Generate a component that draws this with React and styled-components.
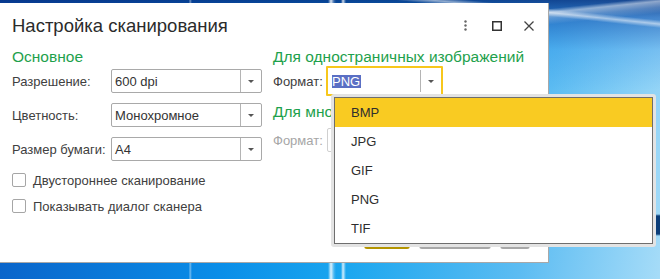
import React from 'react';
import styled, { createGlobalStyle } from 'styled-components';

const Global = createGlobalStyle`
  html, body { margin: 0; padding: 0; }
  body {
    width: 660px;
    height: 279px;
    overflow: hidden;
    font-family: "Liberation Sans", Arial, sans-serif;
  }
`;

const Desktop = styled.div`
  position: relative;
  width: 660px;
  height: 279px;
  overflow: hidden;
  box-sizing: border-box;
  padding-top: 3px;
  background-color: #0a80e0;
  background-image:
    linear-gradient(90deg, transparent 189px, rgba(255,255,255,0.45) 190px, transparent 192px),
    linear-gradient(90deg, transparent 328px, rgba(255,255,255,0.85) 331px, rgba(255,255,255,0.2) 334px, transparent 336px, transparent 341px, rgba(255,255,255,0.8) 343px, transparent 346px),
    linear-gradient(180deg, transparent 214px, #0b3d78 216px, #0b3d78 234px, transparent 236px),
    linear-gradient(174deg, transparent 66px, rgba(255,255,255,0.5) 70px, rgba(255,255,255,0.2) 76px, transparent 82px),
    linear-gradient(186deg, transparent 20px, rgba(255,255,255,0.55) 24px, transparent 28px),
    linear-gradient(180deg, rgba(6,50,130,0.85) 0px, rgba(8,70,170,0.55) 18px, rgba(10,110,220,0.2) 50px, transparent 90px),
    linear-gradient(100deg, #0a5cc4 0%, #0a8ee8 38%, #1aa6ef 55%, #5cbcf2 80%, #a6dcf8 100%);
  background-size: 100% 100%, 100% 100%, 8px 100%, 100% 100%, 100% 100%, 100% 100%, 100% 100%;
  background-position: 0 0, 0 0, 656px 0, 0 0, 0 0, 0 0, 0 0;
  background-repeat: no-repeat;
`;

const Dialog = styled.div`
  width: 549px;
  height: 260px;
  box-sizing: border-box;
  background: #fff;
  border-right: 1px solid #a8a8a8;
  border-bottom: 1px solid #a8a8a8;
  display: flex;
  flex-direction: column;
  color: #404040;
`;

const TitleBar = styled.div`
  display: flex;
  align-items: center;
  justify-content: space-between;
  padding: 12px 14px 0 12px;
`;

const Title = styled.h1`
  margin: 0;
  font-size: 18.5px;
  line-height: 21px;
  font-weight: normal;
  color: #2b2b2b;
`;

const TitleActions = styled.div`
  display: flex;
  align-items: center;
  gap: 22px;
`;

const IconBox = styled.span`
  display: flex;
  align-items: center;
  justify-content: center;
  width: ${(p) => p.$w}px;
  height: 12px;
  margin-right: ${(p) => p.$mr || 0}px;
`;

const Content = styled.div`
  display: grid;
  grid-template-columns: 250px 1fr;
  column-gap: 11px;
  padding: 12px 12px 0 12px;
`;

const Column = styled.div`
  display: flex;
  flex-direction: column;
`;

const SectionHeading = styled.h2`
  margin: ${(p) => p.$mt || 0}px 0 0 0;
  font-size: 15.5px;
  line-height: 18px;
  font-weight: normal;
  color: #1ea14c;
  white-space: nowrap;
`;

const FieldRow = styled.div`
  display: flex;
  align-items: center;
  height: 24px;
  margin-top: ${(p) => p.$mt}px;
`;

const FieldLabel = styled.span`
  flex: none;
  width: ${(p) => p.$w}px;
  font-size: 13px;
  color: ${(p) => (p.$disabled ? '#a6a6a6' : '#404040')};
  white-space: nowrap;
`;

const Select = styled.div`
  position: relative;
  flex: none;
  display: flex;
  align-items: stretch;
  box-sizing: border-box;
  width: ${(p) => p.$w}px;
  height: ${(p) => (p.$focused ? 30 : 24)}px;
  margin-left: ${(p) => (p.$focused ? -2 : 0)}px;
  border: ${(p) => (p.$focused ? '2px solid #f7c71c' : `1px solid ${p.$disabled ? '#d0d0d0' : '#a9a9a9'}`)};
  border-radius: ${(p) => (p.$focused ? 1 : 2)}px;
  background: #fff;
  font-size: 13px;
  color: #333;
`;

const SelectValue = styled.span`
  flex: 1;
  display: flex;
  align-items: center;
  padding-left: ${(p) => (p.$focused ? 4 : 3)}px;
  white-space: nowrap;
`;

const Highlighted = styled.span`
  background: #5a6fc4;
  color: #fff;
  line-height: 13px;
  padding: 0 1px 0 0;
`;

const SelectButton = styled.span`
  flex: none;
  width: 20px;
  display: flex;
  align-items: center;
  justify-content: center;
  border-left: 1px solid #b4b4b4;
  margin: ${(p) => (p.$focused ? '2px 0' : '0')};
`;

const Arrow = styled.span`
  width: 0;
  height: 0;
  border-left: 3px solid transparent;
  border-right: 3px solid transparent;
  border-top: 3px solid #555;
`;

const CheckRow = styled.label`
  display: flex;
  align-items: center;
  gap: 7px;
  height: 20px;
  margin-top: ${(p) => p.$mt}px;
  font-size: 13px;
  color: #404040;
  white-space: nowrap;
`;

const CheckBox = styled.span`
  flex: none;
  width: 14px;
  height: 14px;
  box-sizing: border-box;
  border: 1px solid #a6a6a6;
  border-radius: 2px;
  background: #fff;
`;

const Footer = styled.div`
  margin-top: auto;
  display: flex;
  justify-content: flex-end;
  gap: 9px;
  padding: 0 18px 13px 0;
`;

const Button = styled.div`
  box-sizing: border-box;
  width: ${(p) => p.$w}px;
  height: 24px;
  border-radius: 3px;
  font-size: 13px;
  display: flex;
  align-items: center;
  justify-content: center;
  background: ${(p) => (p.$primary ? '#fbcf28' : '#fff')};
  border: 1px solid ${(p) => (p.$primary ? '#e0b410' : '#c4c4c4')};
  border-bottom: 2px solid ${(p) => (p.$primary ? '#b39400' : '#a8a8a8')};
  color: #333;
`;

const Popup = styled.div`
  position: absolute;
  left: 331px;
  top: 94px;
  width: 325px;
  box-sizing: border-box;
  border: 3px solid #e3e3e3;
  border-radius: 3px;
  background: #e3e3e3;
`;

const List = styled.ul`
  margin: 0;
  padding: 0;
  list-style: none;
  border: 1px solid #6e6e6e;
  background: #fff;
`;

const Item = styled.li`
  height: 29px;
  display: flex;
  align-items: center;
  padding-left: 16px;
  font-size: 13px;
  color: #2e2e2e;
  background: ${(p) => (p.$active ? '#f9cb22' : '#fff')};
`;

const Kebab = () => (
  <svg width="3" height="11" viewBox="0 0 3 11">
    <circle cx="1.5" cy="1.5" r="1.2" fill="#666" />
    <circle cx="1.5" cy="5.5" r="1.2" fill="#666" />
    <circle cx="1.5" cy="9.5" r="1.2" fill="#666" />
  </svg>
);

const Maximize = () => (
  <svg width="10" height="10" viewBox="0 0 10 10">
    <rect x="0.75" y="0.75" width="8.5" height="8.5" fill="none" stroke="#333" strokeWidth="1.5" />
  </svg>
);

const Close = () => (
  <svg width="10" height="10" viewBox="0 0 10 10">
    <path d="M0.5 0.5 L9.5 9.5 M9.5 0.5 L0.5 9.5" stroke="#444" strokeWidth="1.3" fill="none" />
  </svg>
);

const Dropdown = ({ value, width, focused, disabled, highlighted }) => (
  <Select $w={width} $focused={focused} $disabled={disabled}>
    <SelectValue $focused={focused}>
      {highlighted ? <Highlighted>{value}</Highlighted> : value}
    </SelectValue>
    {!disabled && (
      <SelectButton $focused={focused}>
        <Arrow />
      </SelectButton>
    )}
  </Select>
);

const formats = ['BMP', 'JPG', 'GIF', 'PNG', 'TIF'];

export default function App() {
  return (
    <Desktop>
      <Global />
      <Dialog>
        <TitleBar>
          <Title>Настройка сканирования</Title>
          <TitleActions>
            <IconBox $w={3} $mr={3}>
              <Kebab />
            </IconBox>
            <IconBox $w={10}>
              <Maximize />
            </IconBox>
            <IconBox $w={10}>
              <Close />
            </IconBox>
          </TitleActions>
        </TitleBar>
        <Content>
          <Column>
            <SectionHeading>Основное</SectionHeading>
            <FieldRow $mt={3}>
              <FieldLabel $w={99}>Разрешение:</FieldLabel>
              <Dropdown value="600 dpi" width={151} />
            </FieldRow>
            <FieldRow $mt={10}>
              <FieldLabel $w={99}>Цветность:</FieldLabel>
              <Dropdown value="Монохромное" width={151} />
            </FieldRow>
            <FieldRow $mt={10}>
              <FieldLabel $w={99}>Размер бумаги:</FieldLabel>
              <Dropdown value="A4" width={151} />
            </FieldRow>
            <CheckRow $mt={9}>
              <CheckBox />
              Двустороннее сканирование
            </CheckRow>
            <CheckRow $mt={6}>
              <CheckBox />
              Показывать диалог сканера
            </CheckRow>
          </Column>
          <Column>
            <SectionHeading>Для одностраничных изображений</SectionHeading>
            <FieldRow $mt={3}>
              <FieldLabel $w={55}>Формат:</FieldLabel>
              <Dropdown value="PNG" width={117} focused highlighted />
            </FieldRow>
            <SectionHeading $mt={10}>Для многостраничных изображений</SectionHeading>
            <FieldRow $mt={7}>
              <FieldLabel $w={54} $disabled>Формат:</FieldLabel>
              <Dropdown value="" width={117} disabled />
            </FieldRow>
          </Column>
        </Content>
        <Footer>
          <Button $w={46} $primary>ОК</Button>
          <Button $w={72}>Отмена</Button>
          <Button $w={30}>?</Button>
        </Footer>
      </Dialog>
      <Popup>
        <List>
          {formats.map((f, i) => (
            <Item key={f} $active={i === 0}>{f}</Item>
          ))}
        </List>
      </Popup>
    </Desktop>
  );
}
